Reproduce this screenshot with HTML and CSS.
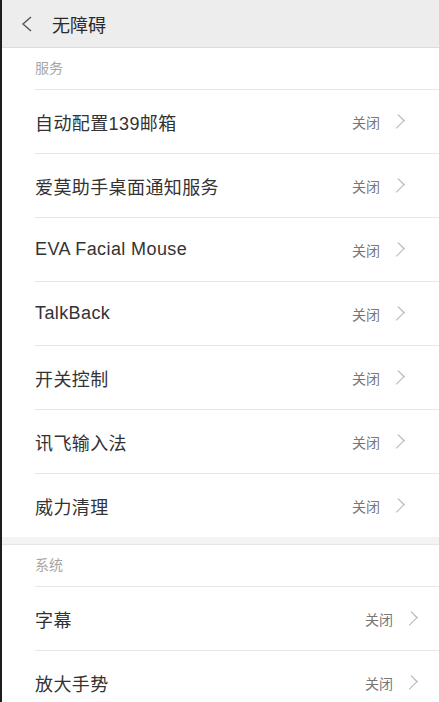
FILE: index.html
```html
<!DOCTYPE html>
<html lang="zh-CN">
<head>
    <meta charset="UTF-8">
    <meta name="viewport" content="width=device-width, initial-scale=1.0">
    <title>无障碍</title>
    <link rel="stylesheet" href="styles.css">
</head>
<body>
    <div class="page">
        <div class="header">
            <svg class="back" width="12" height="16" viewBox="0 0 12 16">
                <path d="M10 1 L2 8 L10 15" fill="none" stroke="#555" stroke-width="1.4"/>
            </svg>
            <span class="title">无障碍</span>
        </div>

        <div class="section first">
            <div class="section-title">服务</div>
            <div class="row"><span class="name">自动配置139邮箱</span><span class="state">关闭</span><span class="arrow"></span></div>
            <div class="row"><span class="name">爱莫助手桌面通知服务</span><span class="state">关闭</span><span class="arrow"></span></div>
            <div class="row"><span class="name">EVA Facial Mouse</span><span class="state">关闭</span><span class="arrow"></span></div>
            <div class="row"><span class="name">TalkBack</span><span class="state">关闭</span><span class="arrow"></span></div>
            <div class="row"><span class="name">开关控制</span><span class="state">关闭</span><span class="arrow"></span></div>
            <div class="row"><span class="name">讯飞输入法</span><span class="state">关闭</span><span class="arrow"></span></div>
            <div class="row"><span class="name">威力清理</span><span class="state">关闭</span><span class="arrow"></span></div>
        </div>

        <div class="gap"></div>

        <div class="section second">
            <div class="section-title">系统</div>
            <div class="row"><span class="name">字幕</span><span class="state">关闭</span><span class="arrow"></span></div>
            <div class="row"><span class="name">放大手势</span><span class="state">关闭</span><span class="arrow"></span></div>
        </div>
    </div>
</body>
</html>
```

FILE: styles.css
```css
body {
    margin: 0;
    padding: 0;
    background: #fff;
    font-family: "Liberation Sans", "Noto Sans CJK SC", sans-serif;
    color: #333;
    overflow: hidden;
}
.page {
    border-left: 2px solid #1d1d1d;
    min-height: 702px;
    background: #fff;
}
.header {
    height: 47px;
    background: #ededed;
    border-bottom: 1px solid #dcdcdc;
    display: flex;
    align-items: center;
}
.back {
    margin-left: 19px;
    margin-right: 19px;
}
.title {
    font-size: 18px;
    color: #2b2b2b;
}
.section-title {
    height: 41px;
    line-height: 41px;
    padding-left: 33px;
    font-size: 14px;
    color: #a6a6a6;
}
.row {
    margin-left: 33px;
    height: 63px;
    border-top: 1px solid #e8e8e8;
    display: flex;
    align-items: center;
}
.first .row {
    padding-right: 34px;
}
.second .row {
    padding-right: 21px;
}
.name {
    flex: 1;
    font-size: 18px;
    letter-spacing: 0.4px;
    color: #333;
}
.state {
    font-size: 14px;
    color: #777;
    margin-right: 13px;
}
.arrow {
    width: 8px;
    height: 8px;
    border-top: 1px solid #b8b8b8;
    border-right: 1px solid #b8b8b8;
    transform: rotate(45deg) scaleY(1.3);
    margin-right: 3px;
}
.gap {
    height: 7px;
    background: #f3f3f3;
    border-bottom: 1px solid #e6e6e6;
}
```
